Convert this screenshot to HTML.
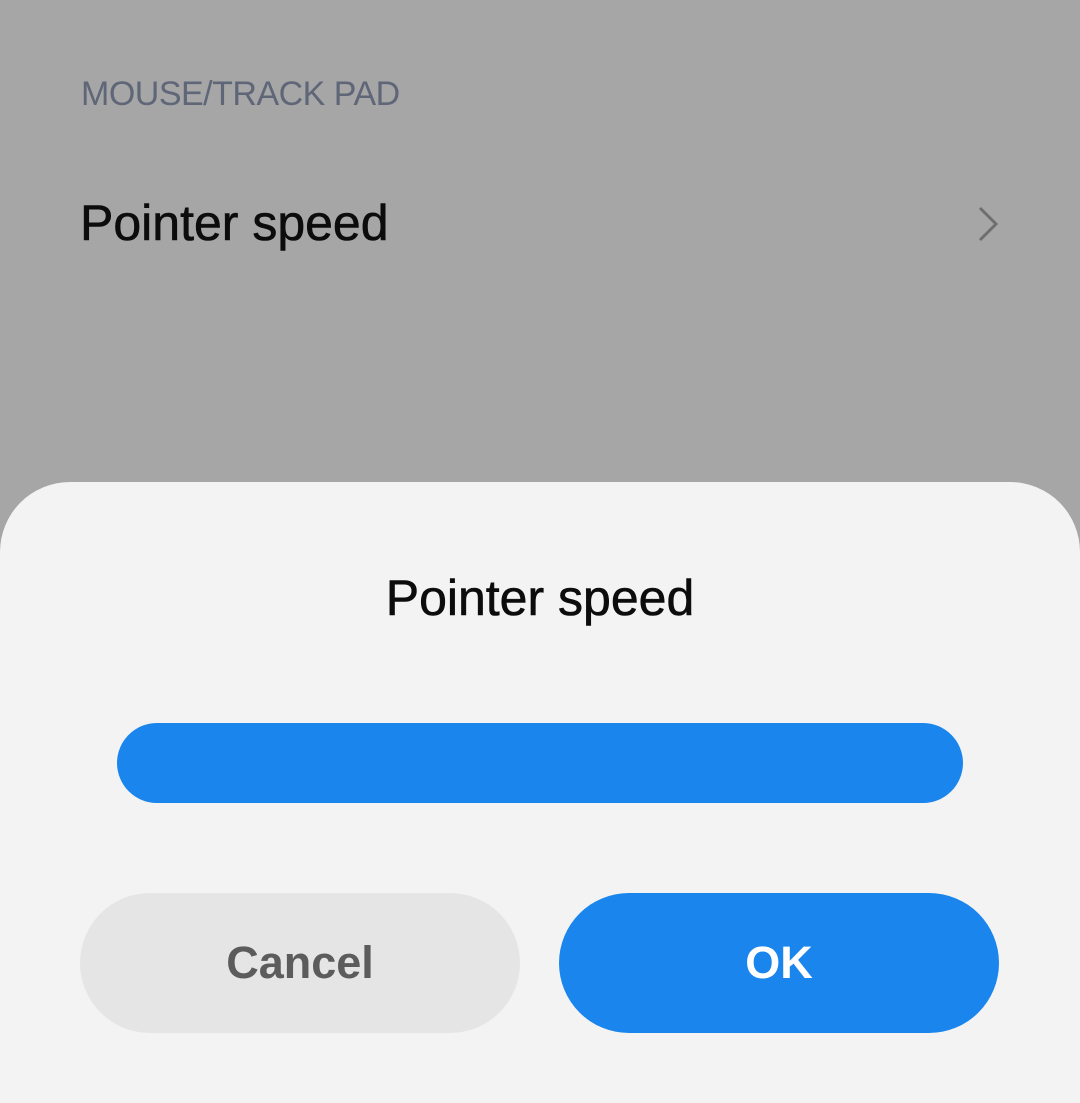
<!DOCTYPE html>
<html><head><style>
html,body{margin:0;padding:0;}
body{width:1080px;height:1103px;background:#a6a6a6;position:relative;overflow:hidden;font-family:"Liberation Sans",sans-serif;}
.hdr{position:absolute;left:81px;top:75px;font-size:34px;color:#5f6677;letter-spacing:-0.5px;}
.item{position:absolute;left:80px;top:194px;font-size:50px;color:#0c0c0c;-webkit-text-stroke:0.6px #0c0c0c;}
.chev{position:absolute;left:972px;top:204px;}
.dlg{position:absolute;left:0;top:482px;width:1080px;height:621px;background:#f3f3f3;border-radius:70px 70px 0 0;}
.title{position:absolute;left:0;width:1080px;top:569px;text-align:center;font-size:50px;color:#0c0c0c;-webkit-text-stroke:0.6px #0c0c0c;}
.bar{position:absolute;left:117px;top:723px;width:846px;height:80px;border-radius:40px;background:#1a85ec;}
.btn{position:absolute;top:893px;width:440px;height:140px;border-radius:70px;text-align:center;line-height:140px;font-size:45px;font-weight:bold;}
.c{left:80px;background:#e5e5e5;color:#5c5c5c;}
.o{left:559px;background:#1a85ec;color:#fff;}
</style></head><body>
<div class="hdr">MOUSE/TRACK PAD</div>
<div class="item">Pointer speed</div>
<svg class="chev" width="30" height="40" viewBox="0 0 30 40"><path d="M8 4 L24 20 L8 36" fill="none" stroke="#6f6f6f" stroke-width="3"/></svg>
<div class="dlg"></div>
<div class="title">Pointer speed</div>
<div class="bar"></div>
<div class="btn c">Cancel</div>
<div class="btn o">OK</div>
</body></html>
